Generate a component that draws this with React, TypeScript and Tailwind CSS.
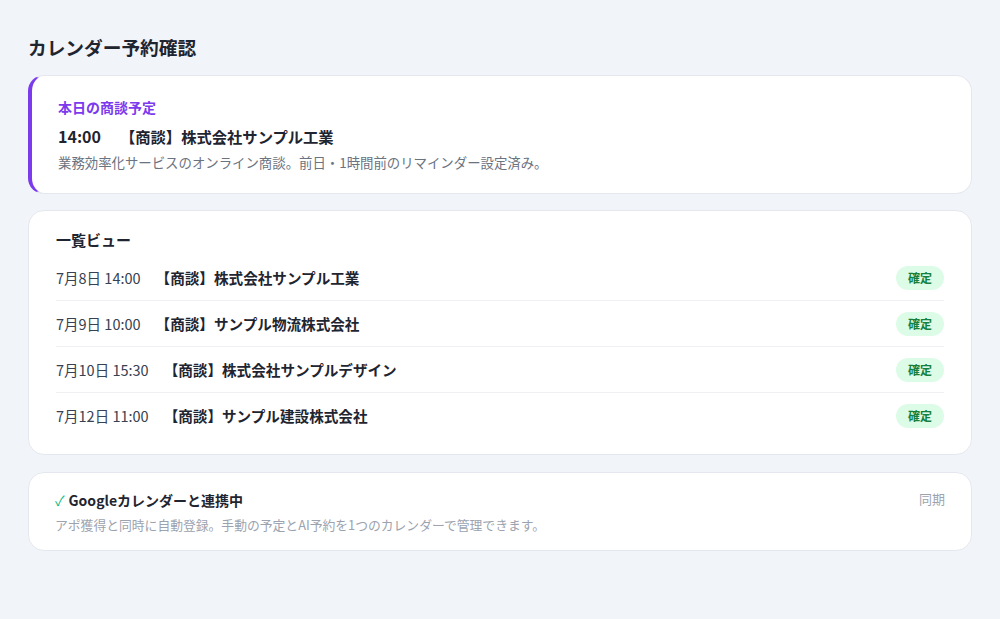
import React from "react";

const rows = [
  { date: "7月8日 14:00", title: "【商談】株式会社サンプル工業" },
  { date: "7月9日 10:00", title: "【商談】サンプル物流株式会社" },
  { date: "7月10日 15:30", title: "【商談】株式会社サンプルデザイン" },
  { date: "7月12日 11:00", title: "【商談】サンプル建設株式会社" },
];

export default function App() {
  return (
    <div
      className="w-[1000px] h-[619px] bg-[#f1f4f8] px-7 pt-[34px]"
      style={{ fontFamily: '"Noto Sans CJK JP", "Noto Sans", sans-serif' }}
    >
      <h1 className="text-[18.7px] leading-[26px] font-bold text-[#1f2530]">カレンダー予約確認</h1>

      <div className="mt-[15px] bg-white rounded-2xl border border-[#e4e8ee] border-l-4 border-l-[#7c3aed] pl-[26px] pr-6 pt-[21px] pb-[21px] flex flex-col">
        <div className="text-[14px] leading-[20px] font-bold text-[#7c3aed]">本日の商談予定</div>
        <div className="mt-[7px] text-[16px] leading-[24px] font-bold text-[#1f2530] flex items-baseline">
          <span>14:00</span>
          <span className="ml-[19px] text-[15.3px]">【商談】株式会社サンプル工業</span>
        </div>
        <div className="mt-[4px] text-[13.4px] leading-[20px] text-[#6b7280]">
          業務効率化サービスのオンライン商談。前日・1時間前のリマインダー設定済み。
        </div>
      </div>

      <div className="mt-[16px] bg-white rounded-2xl border border-[#e4e8ee] px-[27px] pt-[18px] pb-[15px]">
        <div className="text-[15px] leading-[22px] font-bold text-[#1f2530]">一覧ビュー</div>
        <div className="mt-[4px]">
          {rows.map((r, i) => (
            <div
              key={i}
              className={`flex items-center h-[46px] ${i < rows.length - 1 ? "border-b border-[#eef0f3]" : ""}`}
            >
              <span className="text-[14.5px] text-[#374151]">{r.date}</span>
              <span className="ml-[15px] text-[14.6px] font-bold text-[#1f2530]">{r.title}</span>
              <span className="ml-auto h-[24px] px-3 rounded-full bg-[#dcfce7] text-[#15803d] text-[12px] font-bold flex items-center">
                確定
              </span>
            </div>
          ))}
        </div>
      </div>

      <div className="mt-[17px] bg-white rounded-2xl border border-[#e4e8ee] px-[26px] pt-[16px] pb-[15px]">
        <div className="flex items-start justify-between">
          <div className="text-[14px] leading-[22px] font-bold text-[#1f2530] flex items-center">
            <span className="text-[#10b981] font-normal mr-[4px]">✓</span>Googleカレンダーと連携中
          </div>
          <div className="text-[13px] leading-[20px] text-[#9ca3af]">同期</div>
        </div>
        <div className="mt-[4px] text-[12.8px] leading-[20px] text-[#9ca3af]">
          アポ獲得と同時に自動登録。手動の予定とAI予約を1つのカレンダーで管理できます。
        </div>
      </div>
    </div>
  );
}
